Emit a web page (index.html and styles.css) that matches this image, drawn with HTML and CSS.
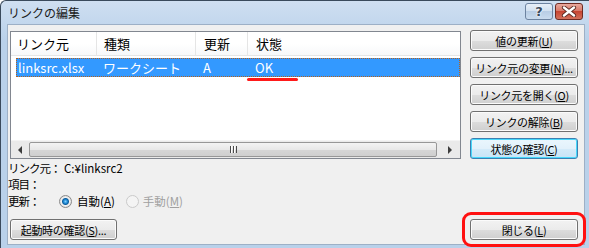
FILE: index.html
```html
<!DOCTYPE html>
<html lang="ja">
<head>
    <meta charset="UTF-8">
    <title>リンクの編集</title>
    <link rel="stylesheet" href="styles.css">
</head>
<body>
    <div class="window">
        <div class="titlebar">
            <span class="title">リンクの編集</span>
            <div class="caption-btns">
                <span class="cap help">?</span>
                <span class="cap close">
                    <svg width="16" height="11" viewBox="0 0 16 11">
                        <path d="M3 1.5 L13 9.5 M13 1.5 L3 9.5" stroke="#5a2a22" stroke-width="4.2" stroke-linecap="round"/>
                        <path d="M3 1.5 L13 9.5 M13 1.5 L3 9.5" stroke="#fff" stroke-width="2.4" stroke-linecap="round"/>
                    </svg>
                </span>
            </div>
        </div>

        <div class="client">
            <div class="top">
                <div class="listview">
                    <div class="lv-header">
                        <div class="hcol c1">リンク元</div>
                        <div class="hcol c2">種類</div>
                        <div class="hcol c3">更新</div>
                        <div class="hcol c4">状態</div>
                    </div>
                    <div class="lv-body">
                        <div class="row selected">
                            <span class="cell c1">linksrc.xlsx</span>
                            <span class="cell c2">ワークシート</span>
                            <span class="cell c3">A</span>
                            <span class="cell c4">OK</span>
                        </div>
                        <div class="mark"></div>
                    </div>
                    <div class="hscroll">
                        <span class="arrow left"></span>
                        <span class="thumb"><span class="grip"></span></span>
                        <span class="arrow right"></span>
                    </div>
                </div>

                <div class="side">
                    <button class="btn">値の更新(<u>U</u>)</button>
                    <button class="btn">リンク元の変更(<u>N</u>)...</button>
                    <button class="btn">リンク元を開く(<u>O</u>)</button>
                    <button class="btn">リンクの解除(<u>B</u>)</button>
                    <button class="btn focus">状態の確認(<u>C</u>)</button>
                </div>
            </div>

            <div class="info">
                <div class="line"><span class="label">リンク元：</span><span class="value">C:¥linksrc2</span></div>
                <div class="line"><span class="label">項目：</span></div>
                <div class="line">
                    <span class="label">更新：</span>
                    <span class="radio checked"></span><span class="rlabel">自動(<u>A</u>)</span>
                    <span class="radio disabled"></span><span class="rlabel disabled">手動(<u>M</u>)</span>
                </div>
            </div>

            <div class="bottom">
                <button class="btn startup">起動時の確認(<u>S</u>)...</button>
                <div class="highlight">
                    <button class="btn close-btn">閉じる(<u>L</u>)</button>
                </div>
            </div>
        </div>
    </div>
</body>
</html>
```

FILE: styles.css
```css
body {
    margin: 0;
    background: #fff;
    font-family: "Noto Sans CJK JP", "Noto Sans", sans-serif;
    font-size: 12px;
}
.window {
    width: 600px;
    height: 247px;
    border: 1px solid #3a4a5c;
    border-right: none;
    border-radius: 6px 6px 0 0;
    background: linear-gradient(#cfdff1, #b9d1ea 40px, #b9d1ea);
    box-sizing: content-box;
    overflow: hidden;
}
.titlebar {
    height: 23px;
    display: flex;
    align-items: center;
    justify-content: space-between;
    padding-left: 7px;
    width: 575px;
}
.title {
    color: #1a1a1a;
    font-size: 12px;
    line-height: 16px;
}
.caption-btns {
    display: flex;
    gap: 2px;
    margin-top: -3px;
}
.cap {
    width: 28px;
    height: 17px;
    box-sizing: border-box;
    border-radius: 3px;
    display: flex;
    align-items: center;
    justify-content: center;
}
.help {
    border: 1px solid #6d83a0;
    background: linear-gradient(#e7eff8, #d3e1f0 45%, #b8cde5 50%, #c9dbee);
    color: #3a4a5c;
    font: bold 13px "DejaVu Sans", sans-serif;
    text-shadow: 0 0 2px #fff, 0 0 2px #fff;
}
.close {
    border: 1px solid #6e2a22;
    background: linear-gradient(#e9a99e, #d97a6a 45%, #c74532 50%, #d2705b);
}
.close svg {
    display: block;
}
.client {
    margin-left: 6px;
    width: 578px;
    height: 221px;
    box-sizing: border-box;
    border: 1px solid #9db0c6;
    background: #f0f0f0;
}
.top {
    display: flex;
    gap: 9px;
    padding: 5px 0 0 2px;
}
.listview {
    margin-top: 1px;
    width: 451px;
    height: 128px;
    box-sizing: border-box;
    border: 1px solid #828790;
    background: #fff;
    display: flex;
    flex-direction: column;
}
.lv-header {
    display: flex;
    height: 23px;
    border-bottom: 1px solid #e5e5e5;
    background: linear-gradient(#fff, #fff 50%, #f7f8f9);
    font-size: 13px;
}
.hcol {
    line-height: 23px;
    border-right: 1px solid #e5e5e5;
    box-sizing: border-box;
    color: #000;
}
.hcol.c1 { width: 86px; padding-left: 6px; }
.hcol.c2 { width: 99px; padding-left: 7px; }
.hcol.c3 { width: 52px; padding-left: 8px; }
.hcol.c4 { flex: 1; padding-left: 8px; border-right: none; }
.lv-body {
    flex: 1;
    padding: 2px 0 0 5px;
}
.row {
    display: flex;
    height: 19px;
    line-height: 19px;
    font-size: 13px;
}
.row.selected {
    background: #3399ff;
    color: #fff;
    outline: 1px dotted #b4611d;
    outline-offset: -1px;
}
.cell { box-sizing: border-box; }
.cell.c1 { width: 81px; padding-left: 2px; }
.cell.c2 { width: 99px; padding-left: 6px; }
.cell.c3 { width: 52px; padding-left: 7px; }
.cell.c4 { padding-left: 7px; }
.mark {
    margin: 1px 0 0 231px;
    width: 51px;
    height: 3px;
    border-radius: 2px;
    background: #ff1a1a;
}
.hscroll {
    height: 17px;
    display: flex;
    align-items: center;
    background: #eaeaea;
    border-top: 1px solid #f4f4f4;
}
.arrow {
    width: 18px;
    height: 17px;
    position: relative;
    flex: none;
}
.arrow::after {
    content: "";
    position: absolute;
    top: 5px;
    border-top: 4px solid transparent;
    border-bottom: 4px solid transparent;
}
.arrow.left::after {
    left: 7px;
    border-right: 4px solid #3d3d3d;
}
.arrow.right {
    width: 22px;
}
.arrow.right::after {
    left: 10px;
    border-left: 4px solid #3d3d3d;
}
.thumb {
    flex: 1;
    height: 15px;
    margin-right: 1px;
    box-sizing: border-box;
    border: 1px solid #979797;
    border-radius: 2px;
    background: linear-gradient(#f3f3f3, #e8e8e8 50%, #d6d6d6 51%, #cfcfcf);
    display: flex;
    align-items: center;
    justify-content: center;
}
.grip {
    width: 7px;
    height: 7px;
    background: repeating-linear-gradient(90deg, #4a4a4a 0 1px, #fff 1px 2px, transparent 2px 3px);
}
.side {
    display: flex;
    flex-direction: column;
    gap: 6px;
}
.btn {
    width: 108px;
    height: 21px;
    padding: 0;
    box-sizing: border-box;
    border: 1px solid #707070;
    border-radius: 3px;
    background: linear-gradient(#f2f2f2, #ebebeb 50%, #dddddd 51%, #cfcfcf);
    box-shadow: inset 0 0 0 1px #fbfbfb;
    font-family: "Noto Sans CJK JP", "Noto Sans", sans-serif;
    font-size: 11px;
    letter-spacing: -0.3px;
    white-space: nowrap;
    line-height: 18px;
    color: #000;
    text-align: center;
}
.btn.focus {
    border-color: #3c7fb1;
    box-shadow: inset 0 0 0 1px #48d8fb;
    background: linear-gradient(#eaf6fd, #e2f1fb 50%, #d4ebf9 51%, #c8e4f7);
}
.info {
    padding-top: 1px;
    line-height: 16px;
    font-size: 11.5px;
}
.line {
    display: flex;
    align-items: center;
    height: 16px;
    white-space: nowrap;
}
.line:last-child {
    height: 18px;
}
.label {
    width: 51px;
    flex: none;
    letter-spacing: -1px;
}
.value {
    margin-left: 5px;
}
.radio {
    width: 13px;
    height: 13px;
    box-sizing: border-box;
    border-radius: 50%;
    border: 1px solid #8a8a8a;
    background: radial-gradient(circle, #fff 0, #e6e6e6 100%);
    flex: none;
}
.radio.checked {
    background: radial-gradient(circle, #7fd0ff 0, #1d85d0 2px, #0f5f9e 3px, #f2f2f2 4px, #dcdcdc 6px);
}
.radio.disabled {
    border-color: #cacaca;
    background: #f4f4f4;
    margin-left: 11px;
}
.rlabel {
    margin-left: 5px;
}
.rlabel.disabled {
    color: #a0a0a0;
    margin-left: 4px;
}
.bottom {
    display: flex;
    justify-content: space-between;
    align-items: center;
    padding: 2px 0 0 2px;
}
.btn.startup {
    width: 107px;
}
.highlight {
    padding: 4px 5px;
    margin-right: -2px;
    border: 3px solid #ff1010;
    border-radius: 9px;
}
```
